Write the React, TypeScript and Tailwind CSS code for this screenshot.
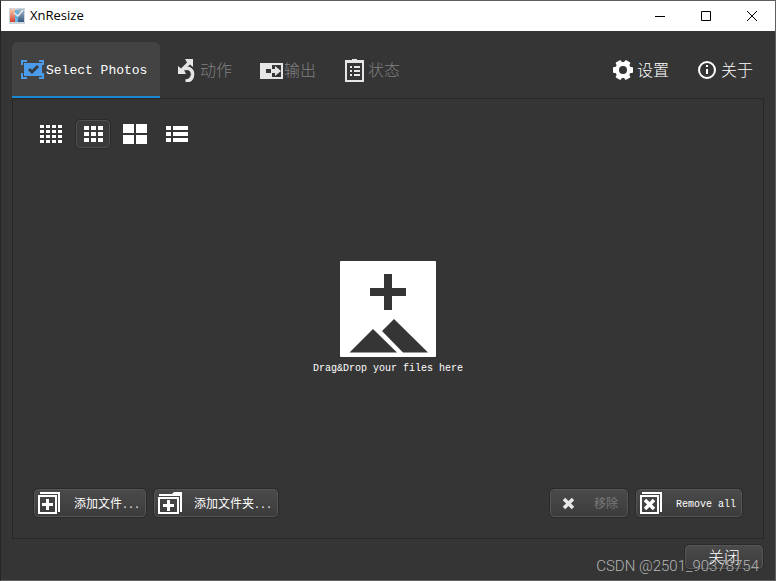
import React from "react";

interface IconProps {
  className?: string;
}

const SelectIcon: React.FC<IconProps> = ({ className }) => (
  <svg viewBox="0 0 24 24" className={className} aria-hidden="true">
    <g fill="none" stroke="#4b9bea" strokeWidth="2">
      <path d="M1 8V4h5M18 4h4v4M22 16v5h-4M6 21H1v-5" />
    </g>
    <path d="M3 6h18v13H3z" fill="#4b9bea" />
    <path d="M8 12l3 3 6-6" fill="none" stroke="#333b45" strokeWidth="3" />
  </svg>
);

const ActionIcon: React.FC<IconProps> = ({ className }) => (
  <svg viewBox="0 0 24 24" className={className} aria-hidden="true">
    <path d="M9 1h8v8l-3-2.500-4 3.500-2 2 2 4H2V8l3 2.500 6-6z" fill="#e6e6e6" />
    <path d="M8 11c5-2 9 1 8.500 6-.5 4-3 6-7 6" fill="none" stroke="#e6e6e6" strokeWidth="3.500" />
  </svg>
);

const OutputIcon: React.FC<IconProps> = ({ className }) => (
  <svg viewBox="0 0 24 24" className={className} aria-hidden="true">
    <path d="M0 5h23v16H0z" fill="#e6e6e6" />
    <path d="M12 7h9v12h-9v-4H6v-4h6z" fill="#353535" />
    <path d="M11 11h4V8l6 5-6 5v-3h-4z" fill="#e6e6e6" />
  </svg>
);

const StatusIcon: React.FC<IconProps> = ({ className }) => (
  <svg viewBox="0 0 24 24" className={className} aria-hidden="true">
    <path d="M1 2h7V1h5v1h7v22H1z" fill="#e6e6e6" />
    <path d="M3 5h15v17H3z" fill="#353535" />
    <path d="M6 8h2v2H6zM10 8h6v2h-6zM6 12h2v2H6zM10 12h6v2h-6zM6 16h2v2H6zM10 16h6v2h-6z" fill="#e6e6e6" />
  </svg>
);

const GearIcon: React.FC<IconProps> = ({ className }) => (
  <svg viewBox="0 0 20 20" className={className} aria-hidden="true">
    <g fill="#fff">
      <rect x="7" y="0" width="6" height="20" rx="1" transform="rotate(30 10 10)" />
      <rect x="7" y="0" width="6" height="20" rx="1" transform="rotate(90 10 10)" />
      <rect x="7" y="0" width="6" height="20" rx="1" transform="rotate(150 10 10)" />
      <circle cx="10" cy="10" r="8" />
    </g>
    <circle cx="10" cy="10" r="4" fill="#353535" />
  </svg>
);

const InfoIcon: React.FC<IconProps> = ({ className }) => (
  <svg viewBox="0 0 20 20" className={className} aria-hidden="true">
    <circle cx="10" cy="10" r="8" fill="none" stroke="#fff" strokeWidth="2" />
    <path d="M9 5h2v2H9zM9 9h2v5H9z" fill="#fff" />
  </svg>
);

const AppLogo: React.FC<IconProps> = ({ className }) => (
  <svg viewBox="0 0 16 16" className={className} aria-hidden="true">
    <defs>
      <linearGradient id="warm" x1="0" y1="0" x2="0" y2="1">
        <stop offset="0" stopColor="#f3cdb4" />
        <stop offset="1" stopColor="#d9412f" />
      </linearGradient>
      <linearGradient id="cool" x1="0" y1="0" x2="0" y2="1">
        <stop offset="0" stopColor="#a9bfd0" />
        <stop offset="1" stopColor="#35567f" />
      </linearGradient>
    </defs>
    <path d="M0 0h16v16H0z" fill="#cfd6dc" />
    <path d="M1 1h5v13H1z" fill="url(#warm)" />
    <path d="M6 2h3v12H6z" fill="#63b5dd" />
    <path d="M9 1h6v13H9z" fill="url(#cool)" />
    <path d="M5 5l4 3 5-6" fill="none" stroke="#e8ecee" strokeWidth="1.500" />
  </svg>
);

const DropIcon: React.FC<IconProps> = ({ className }) => (
  <svg viewBox="0 0 96 96" className={className} aria-hidden="true">
    <rect width="96" height="96" rx="1" fill="#fff" />
    <path d="M44 13h8v14h14v8H52v14h-8V35H30v-8h14z" fill="#353535" />
    <path d="M33 68l24 23.500H9.500zM54 58l34 33.500H63L42 70z" fill="#353535" />
  </svg>
);

const AddFileIcon: React.FC<IconProps> = ({ className }) => (
  <svg viewBox="0 0 24 24" className={className} aria-hidden="true">
    <path d="M2 1h20v20h-2V3H2z" fill="#fff" />
    <path d="M1 5h17v17H1z" fill="none" stroke="#fff" strokeWidth="2" />
    <path d="M8 8h3v4h4v3h-4v4H8v-4H4v-3h4z" fill="#fff" />
  </svg>
);

const AddFolderIcon: React.FC<IconProps> = ({ className }) => (
  <svg viewBox="0 0 24 24" className={className} aria-hidden="true">
    <path d="M1 3h13l2-2h8v20h-2V5H1z" fill="#fff" />
    <path d="M1 7h19v15H1z" fill="none" stroke="#fff" strokeWidth="2" />
    <path d="M9 9h3v4h4v3h-4v4H9v-4H5v-3h4z" fill="#fff" />
  </svg>
);

const RemoveIcon: React.FC<IconProps> = ({ className }) => (
  <svg viewBox="0 0 24 24" className={className} aria-hidden="true">
    <path d="M7 8l9 9M16 8l-9 9" stroke="#e6e6e6" strokeWidth="3.500" />
  </svg>
);

const RemoveAllIcon: React.FC<IconProps> = ({ className }) => (
  <svg viewBox="0 0 24 24" className={className} aria-hidden="true">
    <path d="M2 1h20v20h-2V3H2z" fill="#fff" />
    <path d="M1 5h17v17H1z" fill="none" stroke="#fff" strokeWidth="2" />
    <path d="M5 9l9 9M14 9l-9 9" stroke="#fff" strokeWidth="3.500" />
  </svg>
);

const views = [
  {
    label: "Small thumbnails",
    path: "M1 3h4v3H1zM7 3h4v3H7zM13 3h4v3h-4zM19 3h4v3h-4zM1 8h4v3H1zM7 8h4v3H7zM13 8h4v3h-4zM19 8h4v3h-4zM1 13h4v3H1zM7 13h4v3H7zM13 13h4v3h-4zM19 13h4v3h-4zM1 18h4v3H1zM7 18h4v3H7zM13 18h4v3h-4zM19 18h4v3h-4z",
  },
  {
    label: "Medium thumbnails",
    path: "M3 4h5v4H3zM10 4h5v4h-5zM17 4h5v4h-5zM3 10h5v4H3zM10 10h5v4h-5zM17 10h5v4h-5zM3 16h5v4H3zM10 16h5v4h-5zM17 16h5v4h-5z",
  },
  {
    label: "Large thumbnails",
    path: "M0 2h11v9H0zM13 2h11v9H13zM0 13h11v9H0zM13 13h11v9H13z",
  },
  {
    label: "List",
    path: "M1 4h5v4H1zM8 4h15v4H8zM1 10h5v4H1zM8 10h15v4H8zM1 16h5v4H1zM8 16h15v4H8z",
  },
];

const tabs = [
  { label: "动作", Icon: ActionIcon },
  { label: "输出", Icon: OutputIcon },
  { label: "状态", Icon: StatusIcon },
];

interface PushButtonProps {
  className?: string;
  disabled?: boolean;
  children: React.ReactNode;
}

const PushButton: React.FC<PushButtonProps> = ({ className = "", disabled, children }) => (
  <button
    type="button"
    disabled={disabled}
    className={`flex items-center rounded-sm border border-[#565656] bg-linear-to-b from-[#4a4a4a] to-[#3c3c3c] text-xs text-white outline outline-[#2a2a2a] disabled:text-[#7a7a7a] ${className}`}
  >
    {children}
  </button>
);

const TitleBar = () => (
  <header className="flex h-[30px] items-center bg-white pl-2 text-black">
    <AppLogo className="size-4" />
    <h1 className="pl-[5px] font-['Open_Sans',sans-serif] text-[13px]">XnResize</h1>
    <div className="ml-auto flex">
      <button type="button" aria-label="Minimize" className="flex h-[30px] w-[46px] items-center justify-center">
        <svg viewBox="0 0 10 10" className="size-2.5" shapeRendering="crispEdges">
          <path d="M0 5h10v1H0z" />
        </svg>
      </button>
      <button type="button" aria-label="Maximize" className="flex h-[30px] w-[46px] items-center justify-center">
        <svg viewBox="0 0 10 10" className="size-2.5">
          <path d="M.5.5h9v9h-9z" fill="none" stroke="#000" />
        </svg>
      </button>
      <button type="button" aria-label="Close window" className="flex h-[30px] w-[46px] items-center justify-center">
        <svg viewBox="0 0 10 10" className="size-2.5">
          <path d="M0 0l10 10M10 0L0 10" stroke="#000" />
        </svg>
      </button>
    </div>
  </header>
);

const App: React.FC = () => {
  return (
    <div className="relative flex min-h-screen flex-col border border-[#5f5f5f] border-l-[#262626] bg-[#353535] font-['Liberation_Mono','Noto_Sans_CJK_SC',monospace] text-white">
      <TitleBar />
      <main className="flex flex-1 flex-col p-[11px]">
        <div className="flex h-14 items-stretch">
          <nav className="flex gap-1">
            <button
              type="button"
              className="flex min-w-[148px] items-center gap-px rounded-t-md border-b-2 border-[#1a8ad0] bg-[#434343] px-[9px] text-[13px]"
            >
              <SelectIcon className="size-6" />
              <span className="pt-1">Select Photos</span>
            </button>
            {tabs.map(({ label, Icon }) => (
              <button
                key={label}
                type="button"
                className="flex items-center px-3 text-base font-light text-[#808080]"
              >
                <Icon className="size-6" />
                <span className="pt-1">{label}</span>
              </button>
            ))}
          </nav>
          <div className="ml-auto flex gap-7 pr-[11px] text-base font-light">
            <button type="button" className="flex items-center gap-1">
              <GearIcon className="size-5" />
              <span className="pt-1">设置</span>
            </button>
            <button type="button" className="flex items-center gap-1">
              <InfoIcon className="size-5" />
              <span className="pt-1">关于</span>
            </button>
          </div>
        </div>

        <section className="flex flex-1 flex-col border border-[#272727] p-[21px]">
          <div className="flex gap-2">
            {views.map((view, i) => (
              <button
                key={view.label}
                type="button"
                aria-label={view.label}
                aria-pressed={i === 1}
                className="flex h-7 w-[34px] items-center justify-center rounded-sm aria-pressed:border aria-pressed:border-[#505050] aria-pressed:bg-[#3a3a3a] aria-pressed:outline aria-pressed:outline-[#2a2a2a]"
              >
                <svg viewBox="0 0 24 24" className="size-6 shrink-0" fill="#fff">
                  <path d={view.path} />
                </svg>
              </button>
            ))}
          </div>

          <div className="flex flex-1 flex-col items-center justify-center gap-1">
            <DropIcon className="size-24" />
            <p className="text-[10px] leading-4">Drag&amp;Drop your files here</p>
          </div>

          <div className="flex gap-2">
            <PushButton className="h-7 w-28 gap-3 pl-[3px]">
              <AddFileIcon className="size-6" />
              <span className="pt-1">
                添加文件<span className="text-[10px]">...</span>
              </span>
            </PushButton>
            <PushButton className="h-7 w-[124px] gap-3 pl-[3px]">
              <AddFolderIcon className="size-6" />
              <span className="pt-1">
                添加文件夹<span className="text-[10px]">...</span>
              </span>
            </PushButton>
            <PushButton disabled className="ml-auto h-7 w-[78px] justify-between pr-[9px] pl-[6px]">
              <RemoveIcon className="size-6" />
              <span className="pt-1">移除</span>
            </PushButton>
            <PushButton className="h-7 w-[106px] gap-3 pl-[3px]">
              <RemoveAllIcon className="size-6" />
              <span className="pt-1 text-[10px]">Remove all</span>
            </PushButton>
          </div>
        </section>

        <div className="flex justify-end pt-[6px] pr-px">
          <PushButton className="h-6 w-[78px] justify-center">
            <span className="pt-1 text-base font-light">关闭</span>
          </PushButton>
        </div>
      </main>
      <p className="absolute right-4 bottom-1 font-[Roboto,sans-serif] text-[15px] leading-5 font-light text-[#b4b4b4]">
        CSDN @2501_90378754
      </p>
    </div>
  );
};

export default App;
